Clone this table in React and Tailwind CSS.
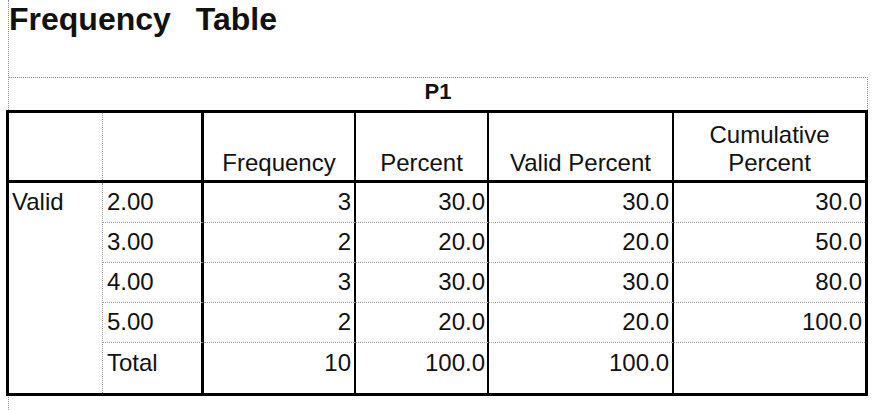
const rows = [
  { label: '2.00', freq: '3', pct: '30.0', valid: '30.0', cum: '30.0' },
  { label: '3.00', freq: '2', pct: '20.0', valid: '20.0', cum: '50.0' },
  { label: '4.00', freq: '3', pct: '30.0', valid: '30.0', cum: '80.0' },
  { label: '5.00', freq: '2', pct: '20.0', valid: '20.0', cum: '100.0' },
]

function DataRow({ row, last }) {
  const line = last ? 'h-[50px] pt-[8px]' : 'h-[40px] pt-[7px] border-b [border-bottom-style:dotted] border-b-[#9a9a9a]'
  return (
    <div className="flex">
      <div className={`w-[101px] pl-[4px] border-r-[3px] border-r-black ${line}`}>{row.label}</div>
      <div className={`w-[152px] pr-[3px] text-right border-r-2 border-r-black ${line}`}>{row.freq}</div>
      <div className={`w-[133px] pr-[2px] text-right border-r-2 border-r-black ${line}`}>{row.pct}</div>
      <div className={`w-[185px] pr-[3px] text-right border-r-2 border-r-black ${line}`}>{row.valid}</div>
      <div className={`w-[191px] pr-[3px] text-right ${line}`}>{row.cum}</div>
    </div>
  )
}

export default function App() {
  return (
    <div className="w-[880px] h-[410px] bg-white overflow-hidden text-[#111]" style={{ fontFamily: '"Liberation Sans", Arial, sans-serif' }}>
      <div className="ml-[8px] h-[410px] border-l border-dotted border-l-[#8a8a8a]">
        {/* タイトル */}
        <div className="h-[77px] pt-[3px] flex gap-[25px] text-[32px] font-bold leading-none">
          <span>Frequency</span>
          <span>Table</span>
        </div>

        {/* キャプション */}
        <div className="w-[859px] h-[33px] border-t border-r border-dotted border-[#8a8a8a] pt-[3px] text-center text-[22px] font-bold leading-[22px]">
          P1
        </div>

        {/* 表 */}
        <div className="-ml-[3px] w-[862px] border-[3px] border-black text-[24px] leading-[24px]">
          <div className="flex h-[70px] border-b-[3px] border-b-black leading-[28px]">
            <div className="w-[94px] border-r border-dotted border-r-[#9a9a9a]"></div>
            <div className="w-[101px] border-r-[3px] border-r-black"></div>
            <div className="w-[152px] border-r-2 border-r-black flex flex-col justify-end items-center pb-[3px]">Frequency</div>
            <div className="w-[133px] border-r-2 border-r-black flex flex-col justify-end items-center pb-[3px]">Percent</div>
            <div className="w-[185px] border-r-2 border-r-black flex flex-col justify-end items-center pb-[3px]">Valid Percent</div>
            <div className="w-[191px] flex flex-col justify-end items-center pb-[3px]">
              <span>Cumulative</span>
              <span>Percent</span>
            </div>
          </div>

          <div className="flex">
            <div className="w-[94px] pl-[3px] pt-[7px] border-r border-dotted border-r-[#9a9a9a]">Valid</div>
            <div className="flex flex-col">
              {rows.map(r => <DataRow key={r.label} row={r} />)}
              <DataRow row={{ label: 'Total', freq: '10', pct: '100.0', valid: '100.0', cum: '' }} last />
            </div>
          </div>
        </div>
      </div>
    </div>
  )
}
